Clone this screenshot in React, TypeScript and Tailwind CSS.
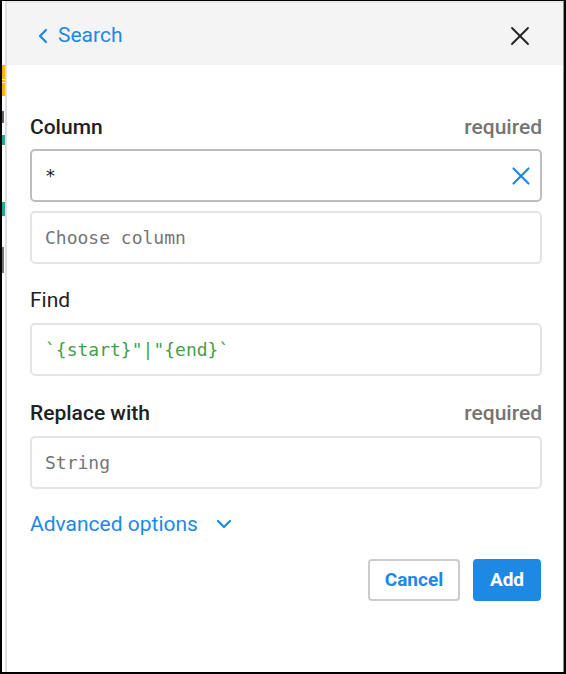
import { ChevronLeft, ChevronDown, X } from 'lucide-react';

const sans = "font-['Roboto','Liberation_Sans',sans-serif]";
const mono = "font-['DejaVu_Sans_Mono','Liberation_Mono',monospace]";

const FieldLabel = ({ text, required, bold }: { text: string; required?: boolean; bold?: boolean }) => (
  <div className="flex items-end justify-between h-[26px]">
    <span className={`text-[21px] leading-[26px] text-[#212121] ${bold ? 'font-medium' : 'font-normal'}`}>{text}</span>
    {required && <span className="text-[21px] leading-[26px] font-medium text-[#757575]">required</span>}
  </div>
);

const Box = ({ children, strong }: { children: React.ReactNode; strong?: boolean }) => (
  <div
    className={`h-[53px] rounded-[5px] border-2 flex items-center pl-[13px] pr-[4px] ${
      strong ? 'border-[#bdbdbd]' : 'border-[#e4e4e4]'
    }`}
  >
    {children}
  </div>
);

export default function App() {
  return (
    <div className={`w-[566px] h-[674px] border-t border-l-2 border-r-2 border-b-2 border-black bg-white flex ${sans}`}>
      {/* sliver of the page behind the panel */}
      <div className="w-[3px] flex flex-col shrink-0">
        <div className="h-[64px]" />
        <div className="h-[31px] bg-[#ffb300] flex flex-col justify-center gap-[2px]">
          <div className="h-px bg-white" />
          <div className="h-px bg-white" />
        </div>
        <div className="h-[15px]" />
        <div className="h-[12px] w-[2px] bg-[#616161]" />
        <div className="h-[12px]" />
        <div className="h-[10px] bg-[#26a69a]" />
        <div className="h-[57px]" />
        <div className="h-[14px] bg-[#26a69a]" />
        <div className="h-[31px]" />
        <div className="h-[26px] w-[2px] bg-[#757575]" />
      </div>

      <div className="flex-1 flex flex-col border-l-2 border-[#e0e0e0] border-r border-r-[#42a5f5]">
        <div className="h-[64px] shrink-0 bg-[#f4f4f4] border-t-2 border-[#e8e8e8] flex items-center justify-between pt-[3px] pl-[24px] pr-[27px]">
          <div className="flex items-center text-[#1e88e5]">
            <ChevronLeft className="w-[24px] h-[24px]" strokeWidth={2.2} />
            <span className="ml-[3px] text-[21px] leading-none">Search</span>
          </div>
          <X className="w-[32px] h-[32px] text-[#212121]" strokeWidth={1.4} />
        </div>

        <div className="flex flex-col pl-[23px] pr-[21px] pt-[49px]">
          <FieldLabel text="Column" required bold />
          <div className="mt-[9px]">
            <Box strong>
              <span className={`${mono} text-[18px] text-[#212121] flex-1`}>*</span>
              <X className="w-[30px] h-[30px] text-[#1e88e5]" strokeWidth={1.7} />
            </Box>
          </div>
          <div className="mt-[9px]">
            <Box>
              <span className={`${mono} text-[18px] text-[#757575]`}>Choose column</span>
            </Box>
          </div>

          <div className="mt-[23px]">
            <FieldLabel text="Find" />
          </div>
          <div className="mt-[10px]">
            <Box>
              <span className={`${mono} text-[18px] text-[#43a047]`}>`{'{start}'}"|"{'{end}'}`</span>
            </Box>
          </div>

          <div className="mt-[24px]">
            <FieldLabel text="Replace with" required bold />
          </div>
          <div className="mt-[10px]">
            <Box>
              <span className={`${mono} text-[18px] text-[#757575]`}>String</span>
            </Box>
          </div>

          <div className="mt-[22px] flex items-center text-[#1e88e5]">
            <span className="text-[21px] leading-[26px]">Advanced options</span>
            <ChevronDown className="ml-[14px] w-[24px] h-[24px]" strokeWidth={2.2} />
          </div>

          <div className="mt-[22px] flex justify-end gap-[13px] pr-[1px]">
            <button className="h-[42px] w-[92px] rounded-[4px] border-2 border-[#cccccc] text-[#1e88e5] text-[19px] font-bold bg-white">
              Cancel
            </button>
            <button className="h-[42px] w-[68px] rounded-[4px] bg-[#1e88e5] text-white text-[19px] font-bold">
              Add
            </button>
          </div>
        </div>
      </div>
    </div>
  );
}
